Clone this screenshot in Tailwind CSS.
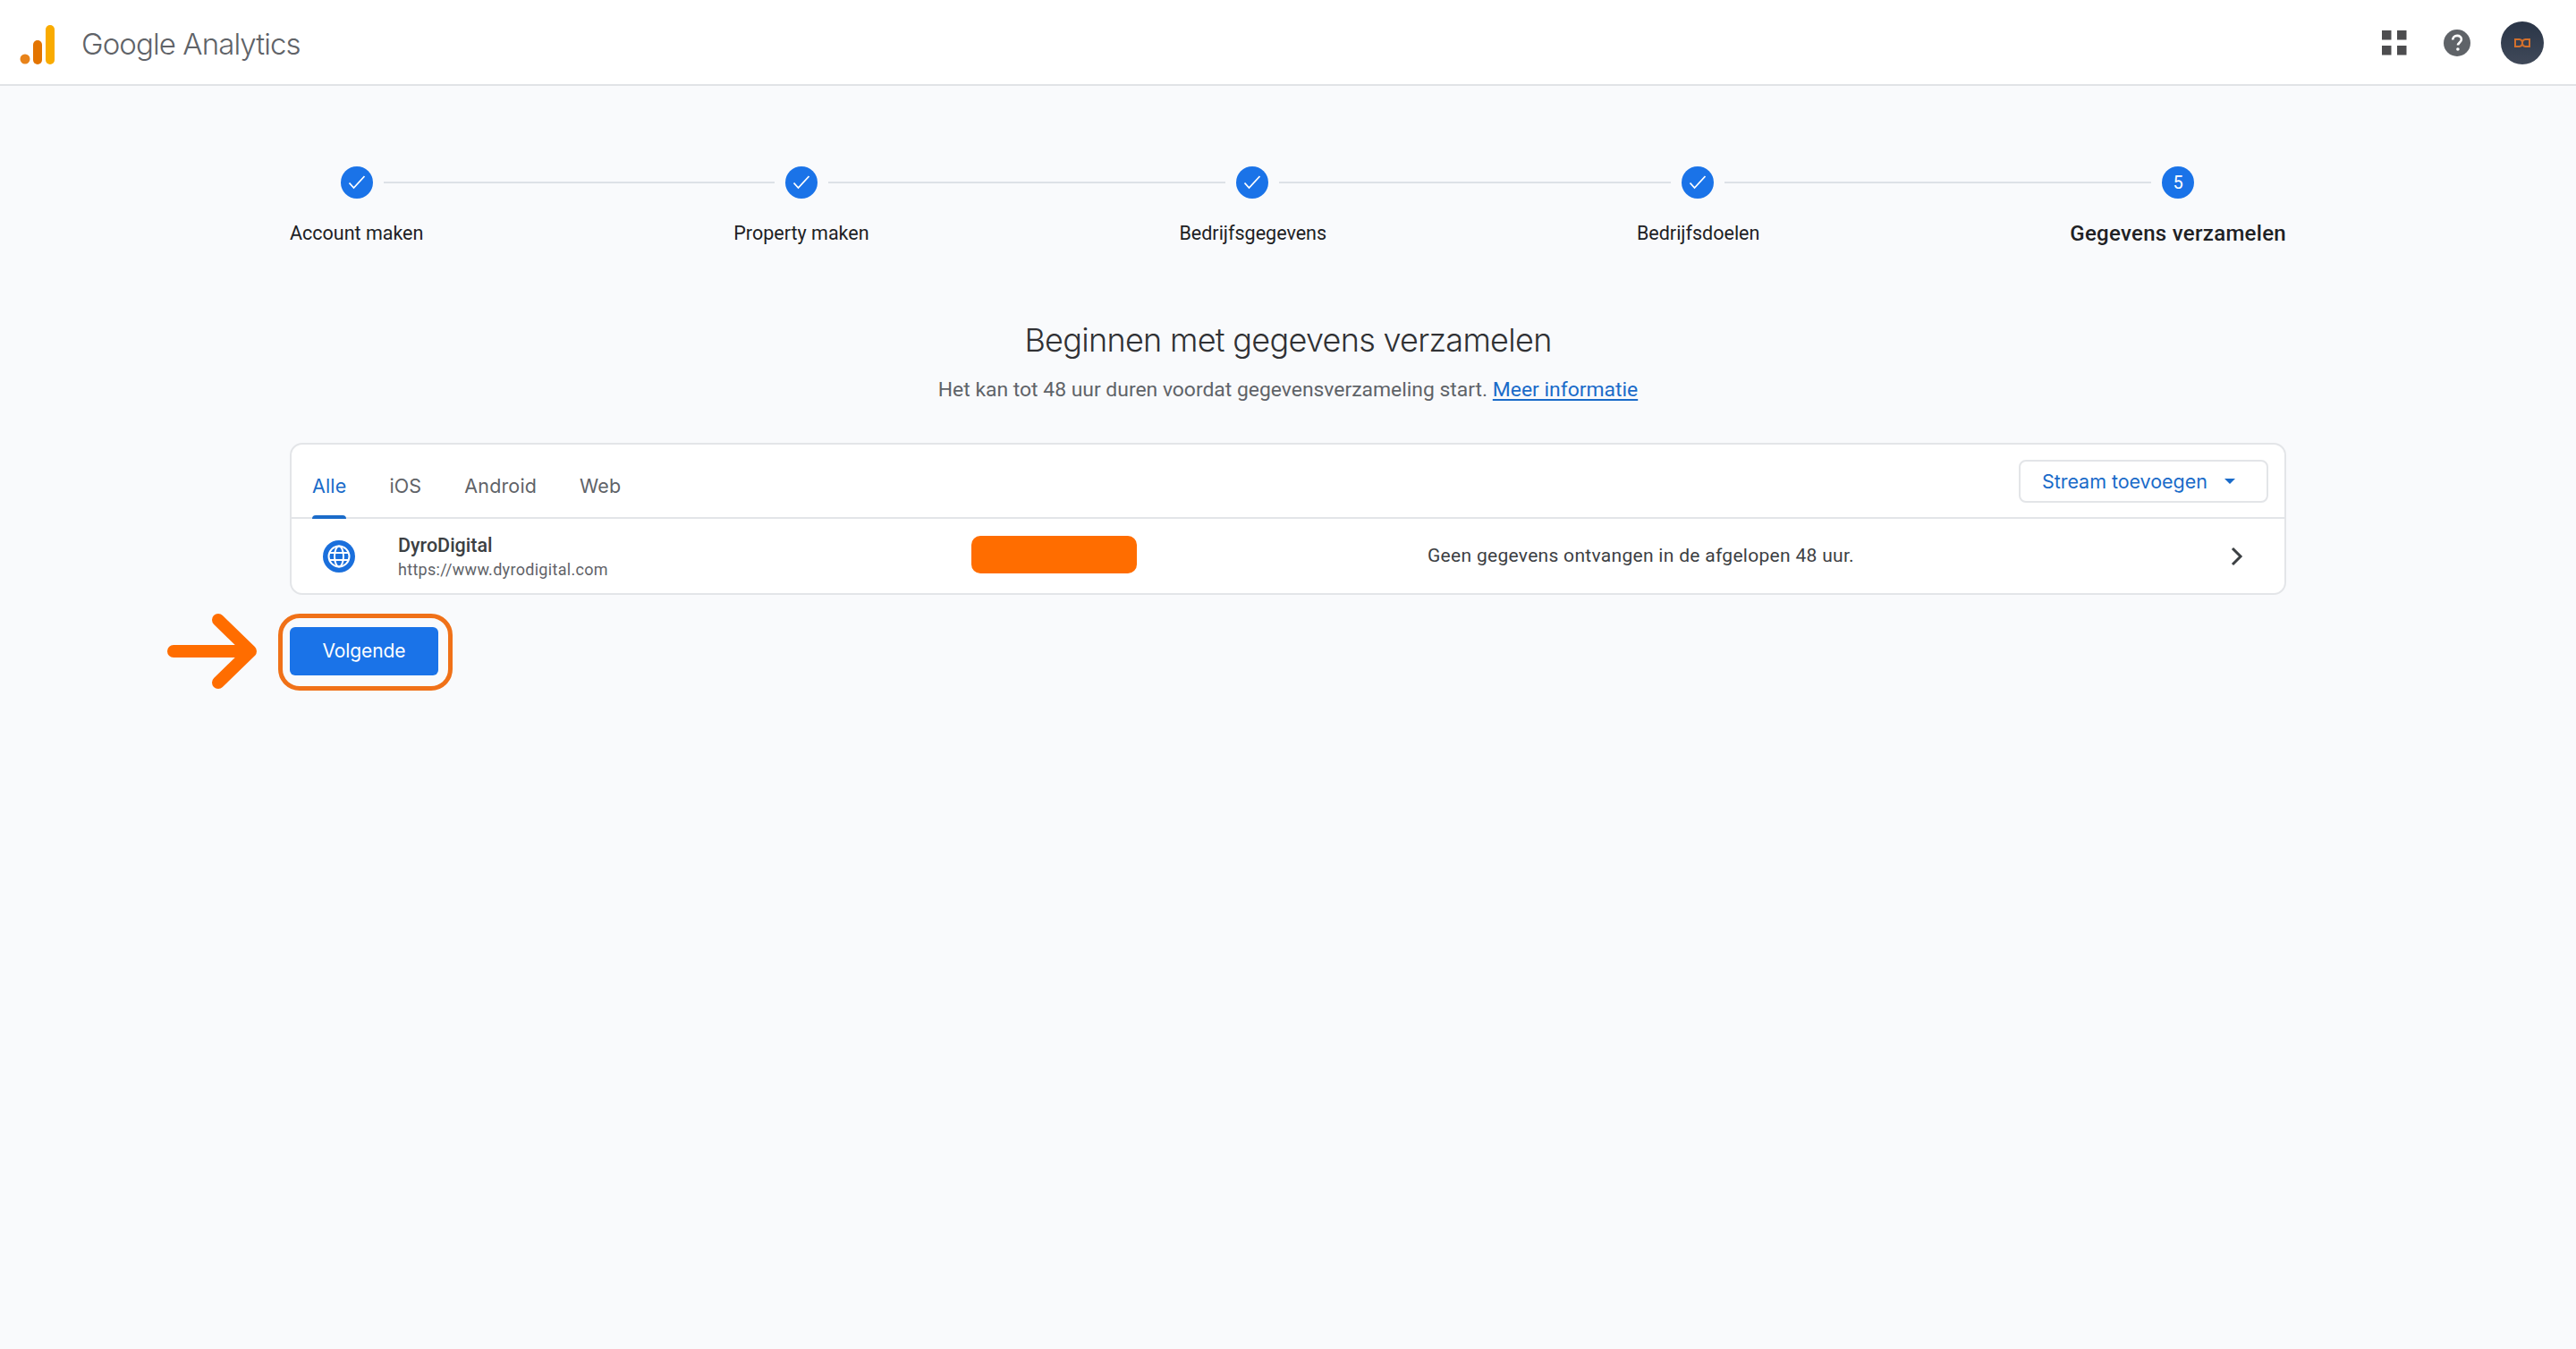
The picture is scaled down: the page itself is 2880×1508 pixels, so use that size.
<!doctype html>
<html lang="nl">
<head>
<meta charset="utf-8">
<title>Google Analytics</title>
<script src="https://cdn.jsdelivr.net/npm/@tailwindcss/browser@4"></script>
</head>
<body class="m-0 bg-[#f9fafc] font-['Roboto',sans-serif] text-[#202124]">
<div class="relative h-[1508px] w-[2880px] overflow-hidden">
  <header class="flex h-[96px] items-center justify-between border-b-2 border-[#e1e3e6] bg-white pl-[22px] pr-[36px] pt-[2px]">
    <div class="flex items-center">
      <svg width="40" height="48" viewBox="0 0 40 48" class="mt-[2px] block">
        <circle cx="6" cy="41" r="5.500" fill="#e8831a"/>
        <rect x="15" y="20" width="10" height="27" rx="5" fill="#e37400"/>
        <rect x="29" y="3" width="10" height="44" rx="5" fill="#f9ab00"/>
      </svg>
      <span class="ml-[29px] mt-[2px] font-['Inter',sans-serif] text-[33px] font-light leading-none tracking-[-0.9px] text-[#5f6368]">Google Analytics</span>
    </div>
    <div class="flex items-center">
      <svg width="28" height="28" viewBox="0 0 28 28" class="block"><g fill="#4d4d4f"><rect x="0" y="0" width="10.500" height="10.500"/><rect x="17" y="0" width="10.500" height="10.500"/><rect x="0" y="17" width="10.500" height="10.500"/><rect x="17" y="17" width="10.500" height="10.500"/></g></svg>
      <svg width="32" height="32" viewBox="0 0 32 32" class="ml-[40px] block"><circle cx="16" cy="16" r="15" fill="#5f6368"/><path d="M11.200 12.600c0-2.900 2.100-4.700 4.900-4.700s4.800 1.700 4.800 4.100c0 3.300-3.900 3.600-3.900 6.600" fill="none" stroke="#fff" stroke-width="2.600"/><circle cx="16.900" cy="23" r="1.800" fill="#fff"/></svg>
      <div class="ml-[33px] flex h-[48px] w-[48px] items-center justify-center rounded-full bg-gradient-to-b from-[#2a3547] to-[#404959]">
        <svg width="18" height="10" viewBox="0 0 18 10" class="block"><path d="M1 1h4.500a4 4 0 0 1 3.500 4 4 4 0 0 1-3.500 4H1zM17 1h-4.500A4 4 0 0 0 9 5a4 4 0 0 0 3.500 4H17z" fill="none" stroke="#d2702d" stroke-width="2"/></svg>
      </div>
    </div>
  </header>

  <main class="mx-auto w-[2232px] pt-[90px]">
    <div class="flex h-[36px] items-center pl-[57px] text-white">
      <span class="flex h-[36px] w-[36px] shrink-0 items-center justify-center rounded-full bg-[#1a73e8]"><svg width="20" height="20" viewBox="0 0 20 20"><path d="M1.500 10.500l5 5.500L18.500 3" fill="none" stroke="#fff" stroke-width="1.800"/></svg></span>
      <span class="mx-[12px] h-[2px] w-[437px] shrink-0 bg-[#dde1e7]"></span>
      <span class="flex h-[36px] w-[36px] shrink-0 items-center justify-center rounded-full bg-[#1a73e8]"><svg width="20" height="20" viewBox="0 0 20 20"><path d="M1.500 10.500l5 5.500L18.500 3" fill="none" stroke="#fff" stroke-width="1.800"/></svg></span>
      <span class="mx-[12px] h-[2px] w-[444px] shrink-0 bg-[#dde1e7]"></span>
      <span class="flex h-[36px] w-[36px] shrink-0 items-center justify-center rounded-full bg-[#1a73e8]"><svg width="20" height="20" viewBox="0 0 20 20"><path d="M1.500 10.500l5 5.500L18.500 3" fill="none" stroke="#fff" stroke-width="1.800"/></svg></span>
      <span class="mx-[12px] h-[2px] w-[438px] shrink-0 bg-[#dde1e7]"></span>
      <span class="flex h-[36px] w-[36px] shrink-0 items-center justify-center rounded-full bg-[#1a73e8]"><svg width="20" height="20" viewBox="0 0 20 20"><path d="M1.500 10.500l5 5.500L18.500 3" fill="none" stroke="#fff" stroke-width="1.800"/></svg></span>
      <span class="mx-[12px] h-[2px] w-[477px] shrink-0 bg-[#dde1e7]"></span>
      <span class="flex h-[36px] w-[36px] shrink-0 items-center justify-center rounded-full bg-[#1a73e8] text-[20px]">5</span>
    </div>
    <div class="mt-[25px] flex justify-between text-[21.500px] leading-[28px]">
      <span>Account maken</span>
      <span>Property maken</span>
      <span>Bedrijfsgegevens</span>
      <span>Bedrijfsdoelen</span>
      <span class="text-[24px] font-medium tracking-[0.3px]">Gegevens verzamelen</span>
    </div>

    <h1 class="mt-[83px] text-center font-['Inter',sans-serif] text-[36px] font-light leading-[44px] tracking-[-0.7px] text-[#303134]">Beginnen met gegevens verzamelen</h1>
    <p class="mt-[20px] text-center text-[22.900px] leading-[28px] text-[#5f6368]">Het kan tot 48 uur duren voordat gegevensverzameling start. <a class="text-[#1a6bc9] underline underline-offset-[3px]" href="#">Meer informatie</a></p>

    <section class="mt-[45px] h-[170px] rounded-[14px] border-2 border-[#e3e5e8] bg-white">
      <div class="flex h-[83px] items-start justify-between border-b-2 border-[#e3e5e8] pl-[23px] pr-[18px]">
        <nav class="flex gap-[48px] pt-[31px] font-['Inter',sans-serif] text-[21.500px] leading-[30px] tracking-[0.15px] text-[#5f6368]">
          <span class="flex h-[52px] flex-col justify-between text-[#1a6bc9]">Alle<span class="h-[4px] rounded-t-[4px] bg-[#1a6bc9]"></span></span>
          <span>iOS</span>
          <span>Android</span>
          <span>Web</span>
        </nav>
        <div class="mt-[17px] flex h-[48px] w-[279px] items-center rounded-[8px] border-2 border-[#e3e5e8] pl-[24px] font-['Inter',sans-serif] text-[21.500px] text-[#1a6bc9]">
          <span class="tracking-[-0.05px]">Stream toevoegen</span>
          <span class="ml-[19px] h-0 w-0 border-x-[6px] border-t-[6px] border-x-transparent border-t-[#1a6bc9]"></span>
        </div>
      </div>
      <div class="flex h-[83px] items-center pl-[35px]">
        <svg width="36" height="36" viewBox="0 0 36 36" class="block shrink-0">
          <circle cx="18" cy="18" r="18" fill="#1a6fdc"/>
          <g fill="none" stroke="#fff" stroke-width="2"><circle cx="18" cy="18" r="11.500"/><ellipse cx="18" cy="18" rx="5" ry="11.500"/><path d="M7 14h22M7 22h22"/></g>
        </svg>
        <div class="ml-[48px] w-[641px] shrink-0 pt-[2px]">
          <div class="text-[21.500px] font-medium leading-[26px] text-[#3c4043]">DyroDigital</div>
          <div class="mt-[2px] text-[18px] leading-[24px] tracking-[0.3px] text-[#5f6368]">https://www.dyrodigital.com</div>
        </div>
        <div class="h-[42px] w-[185px] shrink-0 -translate-y-[2px] rounded-[10px] bg-[#ff6d00]"></div>
        <div class="ml-[325px] text-[21px] tracking-[0.3px] text-[#3c4043]">Geen gegevens ontvangen in de afgelopen 48 uur.</div>
      </div>
      <svg width="14" height="22" viewBox="0 0 14 22" class="absolute left-[2494px] top-[611px] block"><path d="M2 2l9 9-9 9" fill="none" stroke="#3c4043" stroke-width="3"/></svg>
    </section>

    <button class="mt-[36px] flex h-[54px] w-[166px] items-center justify-center rounded-[6px] bg-[#1a73e8] font-['Inter',sans-serif] text-[21px] tracking-[-0.1px] text-white">Volgende</button>
  </main>

  <div class="absolute left-[311px] top-[686px] h-[86px] w-[195px] rounded-[24px] border-[5px] border-[#f07118]"></div>
  <svg width="104" height="88" viewBox="0 0 104 88" class="absolute left-[185px] top-[684px] block"><path d="M9 44h85M59 9l36 35-36 35" fill="none" stroke="#ff6d00" stroke-width="14" stroke-linecap="round" stroke-linejoin="round"/></svg>
</div>
</body>
</html>
